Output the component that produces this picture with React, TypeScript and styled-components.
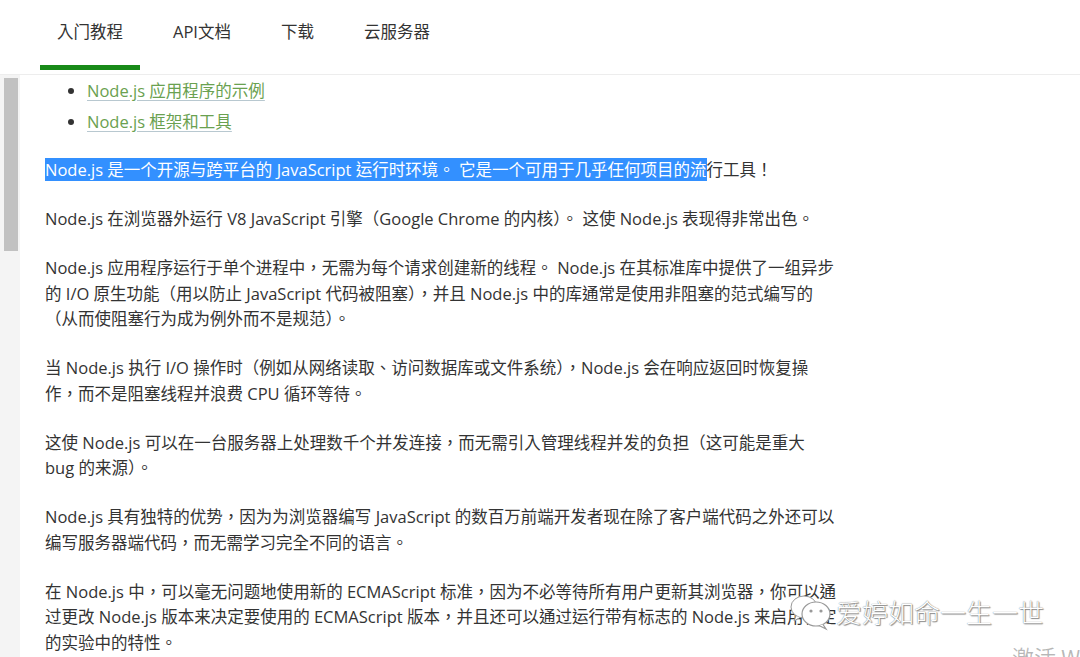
import React from "react";
import styled, { createGlobalStyle } from "styled-components";

const GlobalStyle = createGlobalStyle`
  html, body {
    margin: 0;
    padding: 0;
    background: #ffffff;
    overflow: hidden;
  }
  body {
    font-family: "Open Sans", "Noto Sans CJK TC", sans-serif;
    color: #333333;
  }
`;

const Page = styled.div`
  position: relative;
  width: 1080px;
  height: 657px;
  overflow: hidden;
  display: flex;
  flex-direction: column;
`;

const NavBar = styled.nav`
  height: 74px;
  flex: none;
  display: flex;
  align-items: flex-start;
  gap: 16px;
  padding-left: 40px;
  border-bottom: 1px solid #ededed;
  box-sizing: content-box;
`;

const Tab = styled.div<{ $active?: boolean }>`
  height: 70px;
  box-sizing: border-box;
  padding: 20px 17px 0;
  font-size: 16.5px;
  line-height: 24px;
  color: #333;
  border-bottom: 5px solid ${(p) => (p.$active ? "#188a18" : "transparent")};
`;

const Body = styled.div`
  flex: 1;
  display: flex;
  min-height: 0;
`;

const Rail = styled.div`
  width: 20px;
  flex: none;
  background: #f4f4f4;
  padding: 3px 2px 0 4px;
  box-sizing: border-box;
`;

const Thumb = styled.div`
  width: 14px;
  height: 173px;
  background: #c1c1c1;
`;

const Content = styled.main`
  flex: none;
  padding: 3px 0 0 25px;
  width: 792px;
  font-size: 16.5px;
  line-height: 25.5px;
  color: #333;
`;

const List = styled.ul`
  margin: 0 0 22.5px;
  padding-left: 42px;
  list-style: disc;
`;

const Item = styled.li`
  margin-bottom: 5.5px;
  &::marker {
    color: #333;
  }
`;

const Link = styled.a`
  color: #6aa150;
  text-decoration: underline;
  text-decoration-color: #b8c8d0;
  text-underline-offset: 3px;
`;

const Para = styled.p`
  margin: 0 0 23.5px;
`;

const Selected = styled.span`
  background: #3390ff;
  color: #ffffff;
`;

const Watermark = styled.div`
  position: absolute;
  left: 788px;
  top: 592px;
  display: flex;
  align-items: center;
  gap: 2px;
`;

const WatermarkText = styled.span`
  font-family: "Noto Sans CJK SC", sans-serif;
  font-size: 26px;
  line-height: 34px;
  font-weight: 300;
  color: #ffffff;
  text-shadow: 0 0 1px #666, 1px 1px 1px rgba(0, 0, 0, 0.45);
`;

const Activate = styled.div`
  position: absolute;
  left: 1012px;
  top: 641px;
  font-family: "Noto Sans CJK SC", sans-serif;
  font-size: 22px;
  line-height: 30px;
  color: rgba(0, 0, 0, 0.28);
  white-space: nowrap;
`;

const WeChatIcon = () => (
  <svg width="46" height="40" viewBox="0 0 46 40">
    <ellipse cx="16" cy="15" rx="13" ry="11" fill="#fff" stroke="#999" strokeWidth="1" />
    <path d="M8 24 L6 29 L12 25.5" fill="#fff" stroke="#999" strokeWidth="1" />
    <ellipse cx="28" cy="22" rx="14" ry="12" fill="#fff" stroke="#999" strokeWidth="1.2" />
    <path d="M35 32.5 L38 37 L31 33.5" fill="#fff" stroke="#999" strokeWidth="1.2" />
    <circle cx="23" cy="19" r="1.6" fill="#999" />
    <circle cx="33" cy="19" r="1.6" fill="#999" />
  </svg>
);

const tabs = ["入门教程", "API文档", "下载", "云服务器"];

export default function App() {
  return (
    <>
      <GlobalStyle />
      <Page>
        <NavBar>
          {tabs.map((t, i) => (
            <Tab key={t} $active={i === 0}>
              {t}
            </Tab>
          ))}
        </NavBar>
        <Body>
          <Rail>
            <Thumb />
          </Rail>
          <Content>
            <List>
              <Item>
                <Link>Node.js 应用程序的示例</Link>
              </Item>
              <Item>
                <Link>Node.js 框架和工具</Link>
              </Item>
            </List>
            <Para>
              <Selected>Node.js 是一个开源与跨平台的 JavaScript 运行时环境。 它是一个可用于几乎任何项目的流</Selected>
              行工具！
            </Para>
            <Para>Node.js 在浏览器外运行 V8 JavaScript 引擎（Google Chrome 的内核）。 这使 Node.js 表现得非常出色。</Para>
            <Para>
              Node.js 应用程序运行于单个进程中，无需为每个请求创建新的线程。 Node.js 在其标准库中提供了一组异步的 I/O 原生功能（用以防止 JavaScript 代码被阻塞），并且 Node.js 中的库通常是使用非阻塞的范式编写的（从而使阻塞行为成为例外而不是规范）。
            </Para>
            <Para>
              当 Node.js 执行 I/O 操作时（例如从网络读取、访问数据库或文件系统），Node.js 会在响应返回时恢复操作，而不是阻塞线程并浪费 CPU 循环等待。
            </Para>
            <Para>
              这使 Node.js 可以在一台服务器上处理数千个并发连接，而无需引入管理线程并发的负担（这可能是重大 bug 的来源）。
            </Para>
            <Para>
              Node.js 具有独特的优势，因为为浏览器编写 JavaScript 的数百万前端开发者现在除了客户端代码之外还可以编写服务器端代码，而无需学习完全不同的语言。
            </Para>
            <Para>
              在 Node.js 中，可以毫无问题地使用新的 ECMAScript 标准，因为不必等待所有用户更新其浏览器，你可以通过更改 Node.js 版本来决定要使用的 ECMAScript 版本，并且还可以通过运行带有标志的 Node.js 来启用特定的实验中的特性。
            </Para>
          </Content>
        </Body>
        <Watermark>
          <WeChatIcon />
          <WatermarkText>爱婷如命一生一世</WatermarkText>
        </Watermark>
        <Activate>激活 Windows</Activate>
      </Page>
    </>
  );
}
